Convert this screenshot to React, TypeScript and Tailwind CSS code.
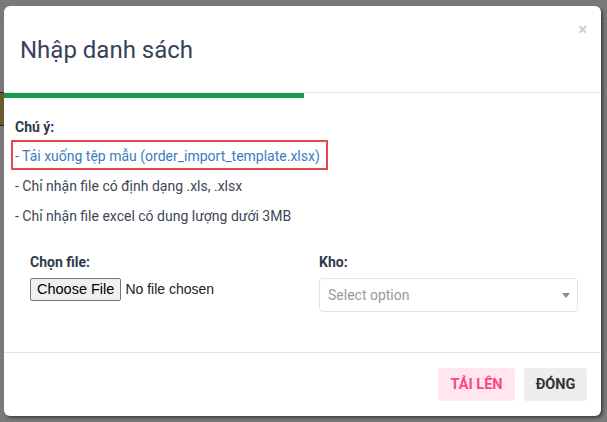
import React from "react";

export default function App() {
  return (
    <div
      className="relative w-[607px] h-[422px] overflow-hidden bg-[#7a7a7a] pl-[4px] pt-[6px]"
      style={{ fontFamily: "Roboto, 'Noto Sans', sans-serif" }}
    >
      {/* faint background page bits */}
      <div className="absolute left-0 top-[18px] h-px w-[607px] bg-[#6e6e6e]" />
      <div className="absolute left-0 top-[92px] h-[34px] w-[6px] bg-[#6b5a2a]" />
      <div className="absolute left-0 top-[92px] h-px w-[6px] bg-[#222]" />
      <div className="absolute left-0 top-[125px] h-px w-[6px] bg-[#222]" />

      <div className="relative w-[597px] h-[410px] rounded-[6px] bg-white shadow-[2px_2px_3px_rgba(0,0,0,0.45)] flex flex-col">
        {/* header */}
        <div className="relative h-[87px] border-b border-[#e4e7ec] flex items-center pl-[16px]">
          <h1 className="text-[24px] leading-[30px] text-[#34425a] font-normal mt-[2px]">
            Nhập danh sách
          </h1>
          <span className="absolute right-[14px] top-[14px] text-[16px] leading-[20px] text-[#cdcdcd] font-bold">
            ×
          </span>
        </div>
        {/* progress */}
        <div className="h-[5px] w-[300px] bg-[#1a9a4c]" />

        {/* body */}
        <div className="flex-1 pl-[7px] pr-[8px] text-[14px] text-[#3d4656]">
          <div className="mt-[19px] pl-[4px] h-[20px] leading-[20px] font-bold text-[#2f3a4c]">
            Chú ý:
          </div>
          <div className="mt-[3px] w-[317px] h-[30px] border-2 border-[#e5484d] leading-[26px] pt-[1px] pl-[2px] text-[#3a7cc0]">
            - Tải xuống tệp mẫu (order_import_template.xlsx)
          </div>
          <div className="mt-[1px] pl-[4px] h-[30px] leading-[30px]">
            - Chỉ nhận file có định dạng .xls, .xlsx
          </div>
          <div className="pl-[4px] h-[30px] leading-[30px]">
            - Chỉ nhận file excel có dung lượng dưới 3MB
          </div>

          <div className="mt-[21px] grid grid-cols-2 w-[578px] pl-[4px]">
            <div className="pl-[15px] pr-[15px]">
              <div className="h-[20px] leading-[20px] font-bold text-[#2f3a4c]">Chọn file:</div>
              <div className="mt-[6px] flex items-center h-[23px]">
                <span
                  className="h-[23px] px-[6px] flex items-center border border-[#767676] rounded-[2px] bg-[#efefef] text-[14.5px] text-black"
                  style={{ fontFamily: "'Liberation Sans', Arial, sans-serif" }}
                >
                  Choose File
                </span>
                <span
                  className="ml-[4px] text-[14px] text-[#222]"
                  style={{ fontFamily: "'Liberation Sans', Arial, sans-serif" }}
                >
                  No file chosen
                </span>
              </div>
            </div>
            <div className="pl-[17px] pr-[13px]">
              <div className="h-[20px] leading-[20px] font-bold text-[#2f3a4c]">Kho:</div>
              <div className="mt-[6px] h-[34px] w-[259px] border border-[#e3e3e3] rounded-[4px] flex items-center justify-between pl-[8px] pr-[7px]">
                <span className="text-[14px] text-[#9a9a9a]">Select option</span>
                <svg width="8" height="5" viewBox="0 0 8 5">
                  <path d="M0 0 L8 0 L4 5 Z" fill="#8a8a8a" />
                </svg>
              </div>
            </div>
          </div>
        </div>

        {/* footer */}
        <div className="h-[64px] border-t border-[#e4e4e4] flex items-center justify-end gap-[9px] pr-[14px]">
          <button className="h-[33px] w-[77px] rounded-[3px] bg-[#ffe6ef] text-[#ff4584] text-[14.5px] font-bold">
            TẢI LÊN
          </button>
          <button className="h-[33px] w-[63px] rounded-[3px] bg-[#ededed] text-[#333] text-[14.5px] font-bold">
            ĐÓNG
          </button>
        </div>
      </div>
    </div>
  );
}
